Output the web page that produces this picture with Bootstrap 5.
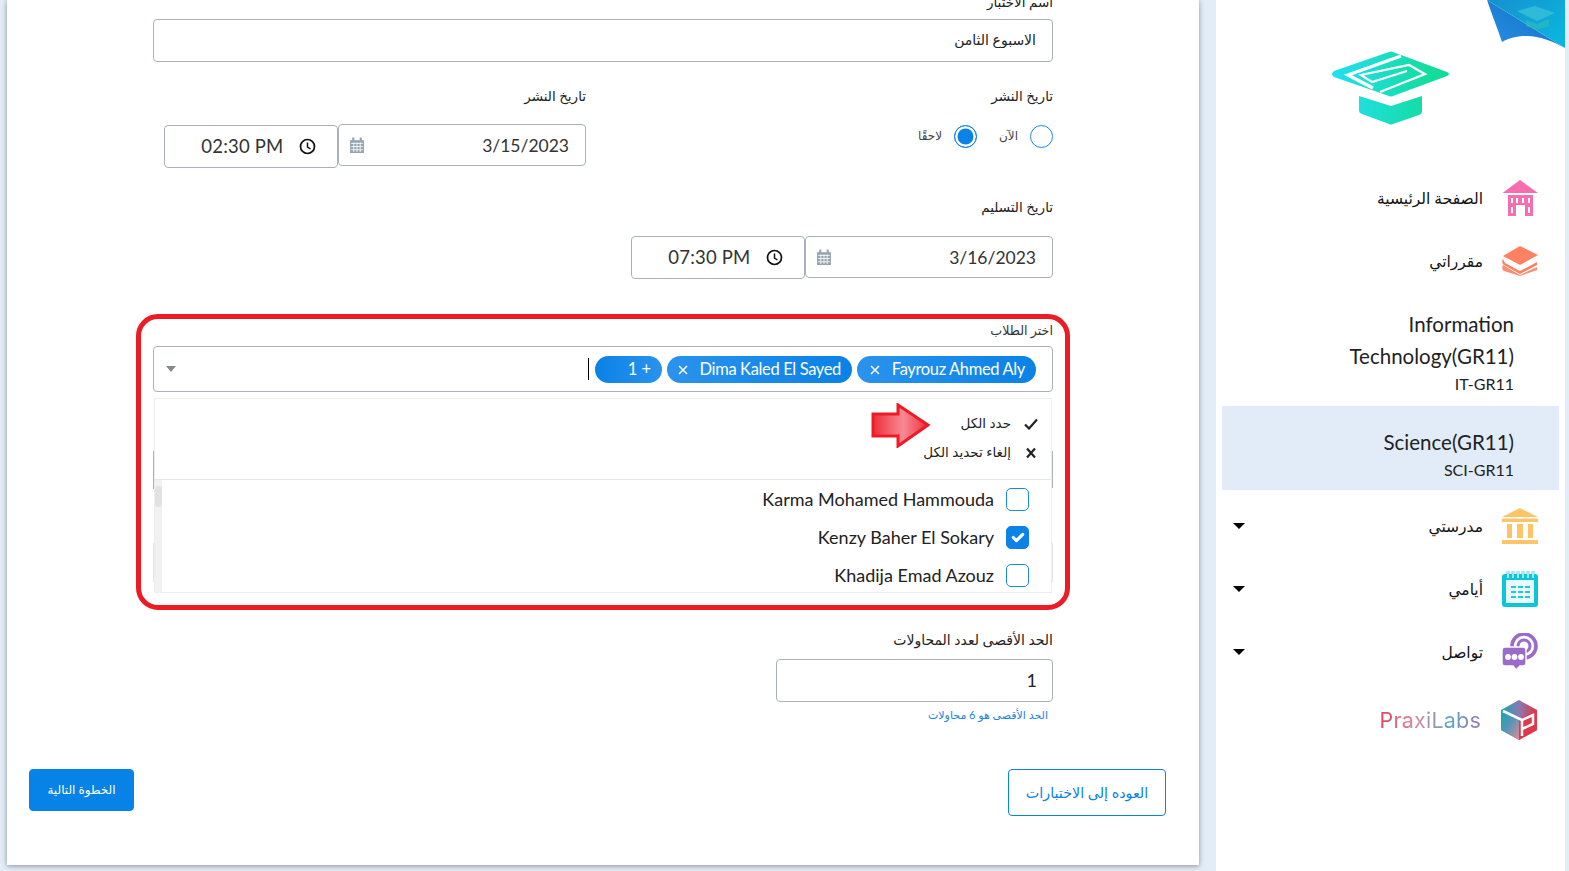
<!DOCTYPE html>
<html lang="ar" dir="rtl">

<head>
    <meta charset="UTF-8">
    <meta name="viewport" content="width=device-width, initial-scale=1.0">
    <title>اختبار</title>
    <link href="https://cdn.jsdelivr.net/npm/bootstrap@5.3.0/dist/css/bootstrap.min.css" rel="stylesheet">
    <style>
        html,
        body {
            height: 871px;
            overflow: hidden;
        }

        body {
            background-color: #e3edf8;
            font-family: Lato, "DejaVu Sans", sans-serif;
            color: #111;
            padding-right: 4px;
        }

        .side-panel {
            width: 349px;
            height: 871px;
            background: #fff;
            position: relative;
            flex: none;
        }

        .fold-corner {
            position: absolute;
            top: 0;
            right: 0;
            width: 78px;
            height: 48px;
        }

        .logo-wrap {
            height: 166px;
            padding: 45px 2px 0 0;
            text-align: center;
        }

        .side-item {
            height: 63px;
            padding: 0 27px 0 17px;
            gap: 19px;
            font-size: 15.5px;
            color: #111;
        }

        .side-item span:not(.side-caret) {
            padding-top: 2px;
        }

        .side-item.tall {
            height: 73px;
        }

        .side-icon {
            width: 36px;
            flex: none;
            display: block;
        }

        .side-icon.wide {
            width: 38px;
        }

        .side-caret {
            margin-right: auto;
            width: 0;
            height: 0;
            border-left: 6px solid transparent;
            border-right: 6px solid transparent;
            border-top: 6px solid #000;
        }

        .course-block {
            padding: 16px 51px 0 0;
            height: 113.5px;
            font-size: 20.5px;
            line-height: 32px;
            text-align: right;
            color: #222;
        }

        .course-block small,
        .course-active small {
            display: block;
            font-size: 16px;
            line-height: 24px;
        }

        .course-active {
            margin: 0 6px 4px;
            height: 84.5px;
            background: #e1ecf8;
            padding: 20px 45px 0 0;
            font-size: 20.5px;
            line-height: 32px;
            color: #222;
        }

        .praxi-text {
            font-family: Inter, sans-serif;
            font-size: 21.5px;
            letter-spacing: .2px;
            background: linear-gradient(90deg, #e0435a, #d88a9c 35%, #5fa6c0 70%, #9a75b5);
            -webkit-background-clip: text;
            background-clip: text;
            color: transparent;
        }

        .main-panel {
            width: 1192px;
            height: 865px;
            margin-right: 17px;
            background: #fff;
            box-shadow: 0 1px 5px rgba(60, 70, 80, .55);
            flex: none;
        }

        .form-area {
            padding: 0 146px;
        }

        .form-label-ar {
            display: block;
            font-size: 13.5px;
            line-height: 24px;
            margin: 0;
            color: #222;
        }

        .first-label {
            margin-top: -10px;
            margin-bottom: 5px;
        }

        .form-control.quiz-input {
            border-color: #a9b2ba;
            border-radius: 4px;
            height: 43px;
            padding: 0 16px 2px;
            font-size: 14px;
            color: #222;
            font-family: Lato, "DejaVu Sans", sans-serif;
        }

        .date-block-a {
            width: 467px;
            flex: none;
            margin-top: 22px;
        }

        .date-block-b {
            width: 433px;
            flex: none;
            margin-top: 22px;
        }

        .label-gap {
            margin-bottom: 16px;
        }

        .date-group {
            width: 422px;
            height: 44px;
        }

        .date-box {
            width: 248.5px;
            height: 42px;
            border: 1px solid #a9b2ba;
            border-radius: 4px;
            padding: 2px 16px 0 10px;
            font-size: 17.5px;
            color: #333;
        }

        .date-box svg {
            margin-top: -2px;
        }

        .time-box {
            width: 173.5px;
            height: 43px;
            border: 1px solid #a9b2ba;
            border-radius: 4px;
            padding: 0 21px 0 0;
            gap: 15px;
            font-size: 18.5px;
            letter-spacing: .2px;
            color: #333;
        }

        .time-box.drop {
            margin-top: 1px;
        }

        .radio-row {
            height: 44px;
            padding-top: 1px;
            font-size: 12px;
            gap: 12px;
            color: #444;
        }

        .radio-row span {
            margin-top: 2px;
        }

        .form-check-input.quiz-radio {
            width: 23px;
            height: 23px;
            margin: 0;
            border: 1.5px solid #1a88e6;
        }

        .form-check-input.quiz-radio:checked {
            background-color: #0a82e6;
            border-color: #0a82e6;
            background-image: none;
            box-shadow: inset 0 0 0 2.5px #fff;
        }

        .radio-text-first {
            margin-left: 10px;
        }

        .delivery {
            margin-top: 27px;
        }

        .delivery .label-gap {
            margin-bottom: 17px;
        }

        .pick-frame {
            position: relative;
            margin: 34px -17px 0;
            padding: 2px 12px 0;
            height: 296px;
            border: 5px solid #ed1c24;
            border-radius: 22px;
        }

        .pick-label {
            font-size: 12.7px;
            line-height: 18px;
            margin-bottom: 7px;
            color: #333;
        }

        .pick-select {
            height: 46px;
            border: 1px solid #a9b2ba;
            border-radius: 4px;
            padding: 0 16px 0 12px;
            gap: 5px;
        }

        .pick-chip {
            height: 27px;
            border-radius: 14px;
            background: linear-gradient(90deg, #2a93ec, #0a82e6);
            color: #fff;
            font-size: 16.5px;
            letter-spacing: -.35px;
            padding: 1px 11px 0 10px;
            gap: 12px;
            flex: none;
        }

        .chip-first {
            width: 179px;
        }

        .chip-second {
            width: 185px;
        }

        .chip-more {
            width: 67px;
            letter-spacing: 0;
            background: linear-gradient(270deg, #2a93ec, #0a82e6);
        }

        .chip-x {
            flex: none;
            order: 2;
        }

        .pick-cursor {
            width: 1px;
            height: 22px;
            background: #000;
            margin-right: 1px;
        }

        .pick-arrow {
            margin-right: auto;
            width: 0;
            height: 0;
            border-left: 5.5px solid transparent;
            border-right: 5.5px solid transparent;
            border-top: 6px solid #7f8a94;
        }

        .pick-menu {
            margin: 6px 1px 0;
            height: 195px;
            border: 1px solid #eee;
            background: #fff;
            position: relative;
        }

        .pick-menu-head {
            height: 81px;
            padding: 10px 13px 0 0;
            border-bottom: 1px solid #e6e6e6;
            font-size: 13.5px;
            color: #222;
        }

        .pick-action {
            height: 29px;
            gap: 13px;
        }

        .pick-action svg {
            flex: none;
        }

        .pick-list {
            height: 112px;
            overflow: hidden;
            position: relative;
            padding: 0 22px 0 0;
        }

        .pick-row {
            height: 38px;
            gap: 12px;
            font-size: 18px;
            color: #222;
        }

        .form-check-input.pick-check {
            width: 23px;
            height: 23px;
            margin: 0;
            border: 1.5px solid #1a88e6;
            border-radius: 5px;
            flex: none;
        }

        .form-check-input.pick-check:checked {
            background-color: #0a82e6;
            border-color: #0a82e6;
        }

        .fake-scroll {
            position: absolute;
            left: 0;
            top: 0;
            bottom: 0;
            width: 7px;
            background: #f1f1f1;
        }

        .fake-thumb {
            margin-top: 6px;
            height: 21px;
            background: #e2e2e2;
            border-radius: 3px;
        }

        .red-arrow {
            position: absolute;
            left: 730px;
            top: 84px;
        }

        .peek {
            position: absolute;
            width: 1px;
            background: #a9b2ba;
        }

        .peek.pale {
            background: #e4e6e8;
        }

        .attempts {
            margin-top: 18px;
        }

        .attempts-label {
            font-size: 14px;
            line-height: 24px;
            margin-bottom: 7px;
            color: #222;
        }

        .form-control.attempts-input {
            width: 277px;
            height: 43px;
            border-color: #a9b2ba;
            border-radius: 4px;
            padding: 0 15px 2px;
            font-size: 18px;
            color: #222;
        }

        .attempts-help {
            font-size: 11px;
            line-height: 16px;
            margin: 5px 5px 0 0;
            color: #1a85e0;
        }

        .action-row {
            margin-top: 46px;
            padding: 0 33px 0 22px;
        }

        .btn.back-btn {
            width: 158px;
            height: 47px;
            border-radius: 4px;
            font-size: 14.3px;
            padding: 0;
            color: #0a82e6;
            border-color: #0a82e6;
        }

        .btn.next-btn {
            width: 105px;
            height: 42px;
            border-radius: 4px;
            font-size: 12px;
            padding: 0;
            background-color: #0782e6;
            border-color: #0782e6;
        }
    </style>
</head>

<body class="d-flex align-items-start">

    <aside class="side-panel">
        <svg class="fold-corner" viewBox="0 0 78 48">
            <defs>
                <linearGradient id="foldA" x1="0" y1="1" x2="1" y2="0">
                    <stop offset="0" stop-color="#2b8ee6" />
                    <stop offset="1" stop-color="#0a6fc0" />
                </linearGradient>
                <linearGradient id="foldB" x1="0" y1="0" x2="1" y2="0.7">
                    <stop offset="0" stop-color="#1690d0" />
                    <stop offset="1" stop-color="#0bb4dd" />
                </linearGradient>
            </defs>
            <path d="M0 0 C5 15 10 27 15 42 C24 37 32 36 40 36 C52 36 66 41 78 48 L0 0Z" fill="url(#foldA)" />
            <path d="M0 0 L78 48 L78 0Z" fill="url(#foldB)" />
            <path d="M30 11 L48 6 L68 13 L50 21Z" fill="#3fc3d8" opacity=".7" />
            <path d="M39 20 L50 24 L62 19 L62 26 L50 30 L39 26Z" fill="#2fbfb8" opacity=".6" />
        </svg>

        <div class="logo-wrap">
            <svg width="130" height="85" viewBox="0 0 130 85">
                <defs>
                    <linearGradient id="logoGrad" x1="0" y1="0" x2="1" y2="0">
                        <stop offset="0" stop-color="#22dff0" />
                        <stop offset="1" stop-color="#10dc8e" />
                    </linearGradient>
                    <linearGradient id="baseGrad" gradientUnits="userSpaceOnUse" x1="34" y1="0" x2="97" y2="0">
                        <stop offset="0" stop-color="#20dfdc" />
                        <stop offset="1" stop-color="#14dca6" />
                    </linearGradient>
                </defs>
                <path d="M9 26 L64 7 Q66 6 68 7 L122 27 Q126 29 122 31 L68 51 Q66 52 64 51 L9 32 Q5 29 9 26Z"
                    fill="url(#logoGrad)" />
                <path d="M76 11 L23 30 L48 43" fill="none" stroke="#fff" stroke-width="3.4" />
                <path d="M55 47 L100 29 L84 20 L36 30 L47 37 L82 26" fill="none" stroke="#fff" stroke-width="2.2" />
                <path d="M34 51 L66 61 L97 51 L97 67 Q97 69 94 70 L68 79 Q66 80 64 79 L37 69 Q34 68 34 66Z"
                    fill="url(#baseGrad)" />
            </svg>
        </div>

        <div class="side-item d-flex align-items-center">
            <svg class="side-icon" width="36" height="36" viewBox="0 0 36 36">
                <path d="M0.5 13 L18 0 L36 13Z" fill="#f56fb0" />
                <path fill-rule="evenodd" fill="#f56fb0"
                    d="M6 15H31V36H23V25H14V36H6ZM9 18V23H11V18ZM14 18V23H16V18ZM20 18V23H22V18ZM26 18V23H28V18ZM9 27V33H11V27ZM26 27V33H28V27Z" />
            </svg>
            <span>الصفحة الرئيسية</span>
        </div>
        <div class="side-item d-flex align-items-center">
            <svg class="side-icon" width="36" height="32" viewBox="0 0 36 32">
                <path d="M1 11 L18 1 L36 10 L18 20Z" fill="#ff8164" />
                <path d="M1 14 Q-1 18 2 20 L18 29 L35 20 L35 17 L18 26 L3 18Z" fill="#ff8164" />
                <path d="M1 20 Q-1 24 2 26 L18 31 L35 25 L35 22 L18 30Z" fill="#ff8164" opacity=".9" />
            </svg>
            <span>مقرراتي</span>
        </div>

        <div class="course-block">
            Information<br>Technology(GR11)
            <small>IT-GR11</small>
        </div>
        <div class="course-active">
            Science(GR11)
            <small>SCI-GR11</small>
        </div>

        <div class="side-item d-flex align-items-center">
            <svg class="side-icon" width="36" height="36" viewBox="0 0 36 36">
                <path d="M18 0 L36 9 H0Z M0 10.5 H36 V14 H0Z M5 16 H10 V30 H5Z M15 16 H21 V30 H15Z M26 16 H31 V30 H26Z M0 32 H36 V36 H0Z"
                    fill="#fdc568" />
            </svg>
            <span>مدرستي</span>
            <span class="side-caret"></span>
        </div>
        <div class="side-item d-flex align-items-center">
            <svg class="side-icon" width="36" height="36" viewBox="0 0 36 36">
                <path d="M3 3 H33 Q36 3 36 6 V33 Q36 36 33 36 H3 Q0 36 0 33 V6 Q0 3 3 3Z" fill="#0cc6d6" />
                <rect x="4" y="9" width="28" height="23" fill="#e8fafc" />
                <path d="M6 0V7 M11 0V7 M16 0V7 M21 0V7 M26 0V7 M31 0V7" stroke="#0cc6d6" stroke-width="2.6" />
                <path d="M6 0V7 M11 0V7 M16 0V7 M21 0V7 M26 0V7 M31 0V7" stroke="#fff" stroke-width="1.2" />
                <path d="M9 16H14M16 16H21M23 16H28M9 21H14M16 21H21M23 21H28M9 26H14M16 26H21M23 26H28"
                    stroke="#22c9d8" stroke-width="2" />
            </svg>
            <span>أيامي</span>
            <span class="side-caret"></span>
        </div>
        <div class="side-item d-flex align-items-center">
            <svg class="side-icon" width="36" height="37" viewBox="0 0 36 37">
                <circle cx="22" cy="13" r="12" fill="none" stroke="#9b6bcc" stroke-width="3.6" />
                <circle cx="22" cy="13" r="6" fill="none" stroke="#9b6bcc" stroke-width="3" />
                <path d="M3 14 H21 Q24 14 24 17 V30 Q24 33 21 33 H18 L14 37 L11 33 H3 Q0 33 0 30 V17 Q0 14 3 14Z"
                    fill="#9b6bcc" stroke="#fff" stroke-width="1.4" />
                <circle cx="6" cy="24" r="2.9" fill="#fff" />
                <circle cx="12.5" cy="24" r="2.9" fill="#fff" />
                <circle cx="19" cy="24" r="2.9" fill="#fff" />
            </svg>
            <span>تواصل</span>
            <span class="side-caret"></span>
        </div>
        <div class="side-item tall d-flex align-items-center">
            <svg class="side-icon wide" width="38" height="40" viewBox="0 0 38 40">
                <defs>
                    <linearGradient id="pxTop" x1="0" y1="0" x2="1" y2="0">
                        <stop offset="0" stop-color="#10a9a6" />
                        <stop offset=".5" stop-color="#8a79b4" />
                        <stop offset="1" stop-color="#e2343f" />
                    </linearGradient>
                    <linearGradient id="pxLeft" x1="0" y1="0" x2="1" y2="1">
                        <stop offset="0" stop-color="#10a9a6" />
                        <stop offset=".5" stop-color="#5a95b8" />
                        <stop offset="1" stop-color="#e58b93" />
                    </linearGradient>
                </defs>
                <path d="M19 0 L37 10 L37 30 L19 40 L1 30 L1 10Z" fill="url(#pxTop)" />
                <path d="M1 10 L19 19 L19 40 L1 30Z" fill="url(#pxLeft)" />
                <path d="M19 19 L37 10 L37 30 L19 40Z" fill="#e0374a" />
                <path d="M3 11 L22 20 M22 36 V20 L33 15 V24 L22 29" fill="none" stroke="#fff" stroke-width="2.5" />
            </svg>
            <span class="praxi-text" dir="ltr">PraxiLabs</span>
        </div>
    </aside>

    <main class="main-panel">
        <div class="form-area">
            <label class="form-label-ar first-label">اسم الاختبار</label>
            <input type="text" class="form-control quiz-input" value="الاسبوع الثامن">

            <div class="d-flex">
                <div class="date-block-a">
                    <div class="form-label-ar label-gap">تاريخ النشر</div>
                    <div class="radio-row d-flex align-items-start">
                        <input class="form-check-input quiz-radio" type="radio" name="publish">
                        <span class="radio-text-first">الآن</span>
                        <input class="form-check-input quiz-radio" type="radio" name="publish" checked>
                        <span>لاحقًا</span>
                    </div>
                </div>
                <div class="date-block-b">
                    <div class="form-label-ar label-gap">تاريخ النشر</div>
                    <div class="date-group d-flex align-items-start">
                        <div class="date-box d-flex align-items-center justify-content-between">
                            <span dir="ltr">3/15/2023</span>
                            <svg width="16" height="16" viewBox="0 0 15 15">
                                <path d="M1 3H14V15H1Z" fill="#94a3b0" />
                                <path d="M2 6H13M2 9H13M2 12H13M4.5 5V14M7.5 5V14M10.5 5V14" stroke="#fff" stroke-width=".8" />
                                <path d="M4 0.5V3.5M11 0.5V3.5" stroke="#94a3b0" stroke-width="2" />
                            </svg>
                        </div>
                        <div class="time-box drop d-flex align-items-center">
                            <svg width="17" height="17" viewBox="0 0 17 17">
                                <circle cx="8.5" cy="8.5" r="7" fill="none" stroke="#111" stroke-width="1.7" />
                                <path d="M8.5 4.5V9L11.5 11" fill="none" stroke="#111" stroke-width="1.5" />
                            </svg>
                            <span dir="ltr">02:30 PM</span>
                        </div>
                    </div>
                </div>
            </div>

            <div class="delivery">
                <div class="form-label-ar label-gap">تاريخ التسليم</div>
                <div class="date-group d-flex align-items-start">
                    <div class="date-box d-flex align-items-center justify-content-between">
                        <span dir="ltr">3/16/2023</span>
                        <svg width="16" height="16" viewBox="0 0 15 15">
                            <path d="M1 3H14V15H1Z" fill="#94a3b0" />
                            <path d="M2 6H13M2 9H13M2 12H13M4.5 5V14M7.5 5V14M10.5 5V14" stroke="#fff" stroke-width=".8" />
                            <path d="M4 0.5V3.5M11 0.5V3.5" stroke="#94a3b0" stroke-width="2" />
                        </svg>
                    </div>
                    <div class="time-box d-flex align-items-center">
                        <svg width="17" height="17" viewBox="0 0 17 17">
                            <circle cx="8.5" cy="8.5" r="7" fill="none" stroke="#111" stroke-width="1.7" />
                            <path d="M8.5 4.5V9L11.5 11" fill="none" stroke="#111" stroke-width="1.5" />
                        </svg>
                        <span dir="ltr">07:30 PM</span>
                    </div>
                </div>
            </div>

            <div class="pick-frame">
                <div class="pick-label">اختر الطلاب</div>
                <div class="pick-select d-flex align-items-center">
                    <span class="pick-chip chip-first d-flex align-items-center">
                        <span dir="ltr">Fayrouz Ahmed Aly</span>
                        <svg class="chip-x" width="10" height="10" viewBox="0 0 10 10">
                            <path d="M1 1L9 9M9 1L1 9" stroke="#fff" stroke-width="1.5" />
                        </svg>
                    </span>
                    <span class="pick-chip chip-second d-flex align-items-center">
                        <span dir="ltr">Dima Kaled El Sayed</span>
                        <svg class="chip-x" width="10" height="10" viewBox="0 0 10 10">
                            <path d="M1 1L9 9M9 1L1 9" stroke="#fff" stroke-width="1.5" />
                        </svg>
                    </span>
                    <span class="pick-chip chip-more d-flex align-items-center">+ 1</span>
                    <span class="pick-cursor"></span>
                    <span class="pick-arrow"></span>
                </div>

                <div class="pick-menu">
                    <div class="pick-menu-head">
                        <div class="pick-action d-flex align-items-center">
                            <svg width="14" height="12" viewBox="0 0 14 12">
                                <path d="M1 6.5L5 10.5L13 1.5" fill="none" stroke="#222" stroke-width="2.2" />
                            </svg>
                            <span>حدد الكل</span>
                        </div>
                        <div class="pick-action d-flex align-items-center">
                            <svg width="14" height="12" viewBox="0 0 14 12">
                                <path d="M3 1.5L11 10.5M11 1.5L3 10.5" stroke="#222" stroke-width="2.2" />
                            </svg>
                            <span>إلغاء تحديد الكل</span>
                        </div>
                    </div>
                    <div class="pick-list">
                        <div class="pick-row d-flex align-items-center">
                            <input class="form-check-input pick-check" type="checkbox">
                            <span>Karma Mohamed Hammouda</span>
                        </div>
                        <div class="pick-row d-flex align-items-center">
                            <input class="form-check-input pick-check" type="checkbox" checked>
                            <span>Kenzy Baher El Sokary</span>
                        </div>
                        <div class="pick-row d-flex align-items-center">
                            <input class="form-check-input pick-check" type="checkbox">
                            <span>Khadija Emad Azouz</span>
                        </div>
                        <div class="fake-scroll">
                            <div class="fake-thumb"></div>
                        </div>
                    </div>
                </div>

                <span class="peek" style="left: 12px; top: 132px; height: 38px"></span>
                <span class="peek pale" style="left: 12px; top: 224px; height: 39px"></span>
                <span class="peek" style="right: 12px; top: 132px; height: 37px"></span>
                <span class="peek pale" style="right: 12px; top: 224px; height: 39px"></span>

                <svg class="red-arrow" width="60" height="45" viewBox="0 0 60 45">
                    <defs>
                        <linearGradient id="arrowFill" x1="0" y1="0" x2="1" y2="0">
                            <stop offset="0" stop-color="#ee2d3a" />
                            <stop offset=".55" stop-color="#f78a94" />
                            <stop offset="1" stop-color="#ee2d3a" />
                        </linearGradient>
                    </defs>
                    <path d="M2 11 H27 V2 L57 22 L27 43 V33 H2Z" fill="url(#arrowFill)" stroke="#ed1c24"
                        stroke-width="3" />
                </svg>
            </div>

            <div class="attempts">
                <div class="attempts-label">الحد الأقصى لعدد المحاولات</div>
                <input type="text" class="form-control attempts-input" value="1">
                <div class="attempts-help">الحد الأقصى هو 6 محاولات</div>
            </div>
        </div>

        <div class="action-row d-flex justify-content-between align-items-start">
            <button type="button" class="btn btn-outline-primary back-btn">العوده إلى الاختبارات</button>
            <button type="button" class="btn btn-primary next-btn">الخطوة التالية</button>
        </div>
    </main>

    <script src="https://cdn.jsdelivr.net/npm/bootstrap@5.3.0/dist/js/bootstrap.bundle.min.js"></script>
</body>

</html>
